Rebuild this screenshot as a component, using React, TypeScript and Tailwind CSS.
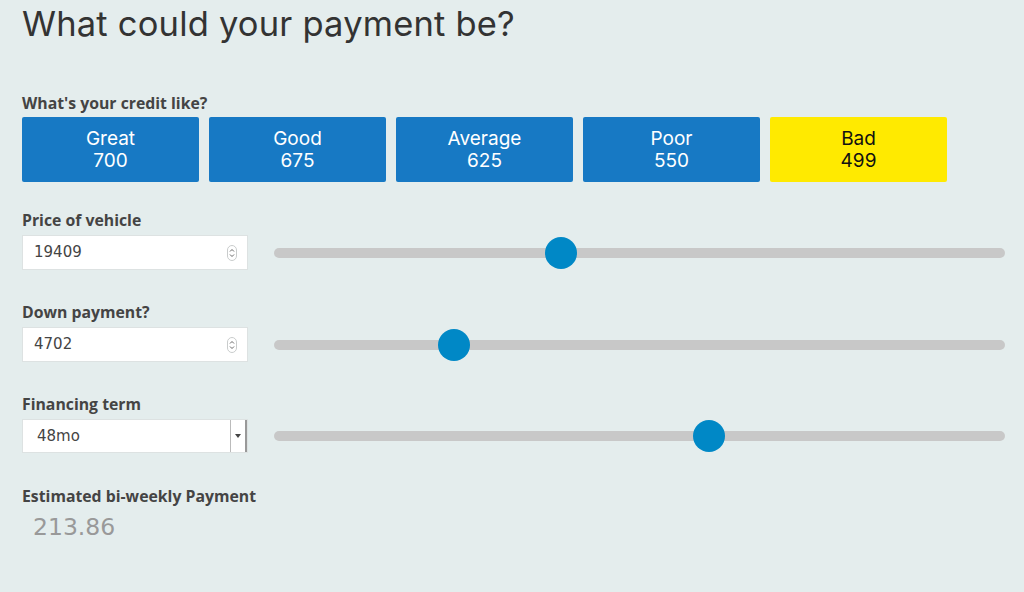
const credits = [
  { name: "Great", score: 700 },
  { name: "Good", score: 675 },
  { name: "Average", score: 625 },
  { name: "Poor", score: 550 },
  { name: "Bad", score: 499, active: true },
];

const labelCls = "text-[15.8px] font-bold text-[#444] leading-[20px] font-['Open_Sans',sans-serif]";

function Spinner() {
  return (
    <svg width="10" height="16" viewBox="0 0 10 16" className="shrink-0">
      <rect x="0.5" y="0.5" width="9" height="15" rx="4.5" fill="#fff" stroke="#c9cccc" />
      <path d="M3 6.5 L5 4.5 L7 6.5" fill="none" stroke="#666" strokeWidth="1" />
      <path d="M3 9.5 L5 11.5 L7 9.5" fill="none" stroke="#666" strokeWidth="1" />
    </svg>
  );
}

function Slider({ pos }: { pos: number }) {
  return (
    <div className="relative flex-1 h-[32px] flex items-center">
      <div className="w-full h-[10px] rounded-full bg-[#c8c8c8]" />
      <div
        className="absolute w-[32px] h-[32px] rounded-full bg-[#0088c6]"
        style={{ left: `calc(${pos}% - 16px)` }}
      />
    </div>
  );
}

function NumberRow({ label, value, pos }: { label: string; value: string; pos: number }) {
  return (
    <div className="mb-[32px]">
      <div className={labelCls}>{label}</div>
      <div className="flex items-center mt-[5px] gap-[26px]">
        <div className="w-[226px] h-[35px] bg-white border border-[#dde2e2] flex items-center justify-between pl-[11px] pr-[10px]">
          <span className="text-[15px] text-[#444] font-['DejaVu_Sans',sans-serif]">{value}</span>
          <Spinner />
        </div>
        <Slider pos={pos} />
      </div>
    </div>
  );
}

export default function App() {
  return (
    <div className="w-[1024px] h-[592px] bg-[#e4eded] pl-[22px] pr-[19px] pt-[1px] overflow-hidden">
      <h1 className="text-[34.5px] leading-[46px] text-[#333] font-['Inter',sans-serif] tracking-[0.2px]">
        What could your payment be?
      </h1>

      <div className={`mt-[46px] ${labelCls}`}>What's your credit like?</div>
      <div className="flex gap-[10px] mt-[4px]">
        {credits.map((c) => (
          <div
            key={c.name}
            className={`w-[177px] h-[65px] rounded-[2px] flex flex-col items-center justify-center text-[19px] leading-[22px] font-['Inter',sans-serif] ${
              c.active ? "bg-[#ffea00] text-[#111]" : "bg-[#1779c4] text-white"
            }`}
          >
            <span>{c.name}</span>
            <span>{c.score}</span>
          </div>
        ))}
      </div>

      <div className="h-[28px]" />
      <NumberRow label="Price of vehicle" value="19409" pos={39.3} />
      <NumberRow label="Down payment?" value="4702" pos={24.6} />

      <div>
        <div className={labelCls}>Financing term</div>
        <div className="flex items-center mt-[5px] gap-[26px]">
          <div className="w-[226px] h-[34px] bg-white border border-[#dde2e2] flex items-stretch">
            <span className="flex-1 flex items-center pl-[14px] text-[15px] text-[#444] font-['DejaVu_Sans',sans-serif]">48mo</span>
            <span className="w-[17px] border-l border-[#bbb] border-r-2 border-r-[#999] flex items-center justify-center">
              <svg width="6" height="4" viewBox="0 0 6 4">
                <path d="M0 0 L6 0 L3 4 Z" fill="#444" />
              </svg>
            </span>
          </div>
          <Slider pos={59.5} />
        </div>
      </div>

      <div className={`mt-[33px] ${labelCls}`}>Estimated bi-weekly Payment</div>
      <div className="mt-[7px] pl-[11px] text-[23.5px] leading-[28px] text-[#999] font-['DejaVu_Sans',sans-serif]">
        213.86
      </div>
    </div>
  );
}
